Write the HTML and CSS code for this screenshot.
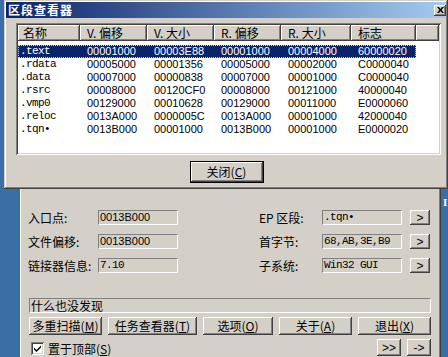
FILE: index.html
```html
<!DOCTYPE html>
<html>
<head>
<meta charset="utf-8">
<link rel="stylesheet" href="styles.css">
</head>
<body>
<div class="desktop">
  <div class="desk-label">I</div>

  <div class="mainwin">
    <div class="fields">
      <div class="frow">
        <div class="fgroup gleft"><span class="flabel lw1">入口点:</span><span class="fbox num">0013B000</span></div>
        <div class="fgroup gright"><span class="flabel lw2">EP 区段:</span><span class="fbox mono">.tqn•</span><span class="btn sbtn">&gt;</span></div>
      </div>
      <div class="frow">
        <div class="fgroup gleft"><span class="flabel lw1">文件偏移:</span><span class="fbox num">0013B000</span></div>
        <div class="fgroup gright"><span class="flabel lw2">首字节:</span><span class="fbox mono">68,AB,3E,B9</span><span class="btn sbtn">&gt;</span></div>
      </div>
      <div class="frow">
        <div class="fgroup gleft"><span class="flabel lw1">链接器信息:</span><span class="fbox mono">7.10</span></div>
        <div class="fgroup gright"><span class="flabel lw2">子系统:</span><span class="fbox mono">Win32 GUI</span><span class="btn sbtn">&gt;</span></div>
      </div>
    </div>

    <div class="status">什么也没发现</div>

    <div class="btnrow">
      <button class="btn b1">多重扫描(<u>M</u>)</button>
      <button class="btn b2">任务查看器(<u>T</u>)</button>
      <button class="btn b3">选项(<u>O</u>)</button>
      <button class="btn b4">关于(<u>A</u>)</button>
      <button class="btn b5">退出(<u>X</u>)</button>
    </div>

    <div class="bottomrow">
      <label class="chk">
        <span class="chkbox"><svg width="9" height="9" viewBox="0 0 9 9"><path d="M1 3.5 L3.5 6 L8 1.5 L8 3.5 L3.5 8 L1 5.5 Z" fill="#000"/></svg></span>
        <span>置于顶部(<u>S</u>)</span>
      </label>
      <div class="arrows">
        <span class="btn abtn">&gt;&gt;</span>
        <span class="btn abtn">-&gt;</span>
      </div>
    </div>
  </div>

  <div class="dialog">
    <div class="titlebar">
      <span class="title">区段查看器</span>
      <span class="closebtn"><svg width="7" height="6" viewBox="0 0 7 6"><path d="M0 0 L2 0 L3.5 2 L5 0 L7 0 L4.5 3 L7 6 L5 6 L3.5 4 L2 6 L0 6 L2.5 3 Z" fill="#000"/></svg></span>
    </div>
    <div class="list">
      <div class="lhead">
        <span class="hc c1">名称</span>
        <span class="hc c2">V. 偏移</span>
        <span class="hc c3">V. 大小</span>
        <span class="hc c4">R. 偏移</span>
        <span class="hc c5">R. 大小</span>
        <span class="hc c6">标志</span>
        <span class="hc cx"></span>
      </div>
      <div class="lbody">
        <div class="lrow sel"><span class="cell c1 mono">.text</span><span class="cell c2">00001000</span><span class="cell c3">00003E88</span><span class="cell c4">00001000</span><span class="cell c5">00004000</span><span class="cell c6">60000020</span></div>
        <div class="lrow"><span class="cell c1 mono">.rdata</span><span class="cell c2">00005000</span><span class="cell c3">00001356</span><span class="cell c4">00005000</span><span class="cell c5">00002000</span><span class="cell c6">C0000040</span></div>
        <div class="lrow"><span class="cell c1 mono">.data</span><span class="cell c2">00007000</span><span class="cell c3">00000838</span><span class="cell c4">00007000</span><span class="cell c5">00001000</span><span class="cell c6">C0000040</span></div>
        <div class="lrow"><span class="cell c1 mono">.rsrc</span><span class="cell c2">00008000</span><span class="cell c3">00120CF0</span><span class="cell c4">00008000</span><span class="cell c5">00121000</span><span class="cell c6">40000040</span></div>
        <div class="lrow"><span class="cell c1 mono">.vmp0</span><span class="cell c2">00129000</span><span class="cell c3">00010628</span><span class="cell c4">00129000</span><span class="cell c5">00011000</span><span class="cell c6">E0000060</span></div>
        <div class="lrow"><span class="cell c1 mono">.reloc</span><span class="cell c2">0013A000</span><span class="cell c3">0000005C</span><span class="cell c4">0013A000</span><span class="cell c5">00001000</span><span class="cell c6">42000040</span></div>
        <div class="lrow"><span class="cell c1 mono">.tqn•</span><span class="cell c2">0013B000</span><span class="cell c3">00001000</span><span class="cell c4">0013B000</span><span class="cell c5">00001000</span><span class="cell c6">E0000020</span></div>
      </div>
    </div>
    <div class="dlgfoot">
      <button class="btn defbtn">关闭(<u>C</u>)</button>
    </div>
  </div>
</div>
</body>
</html>
```

FILE: styles.css
```css
* { box-sizing: border-box; }
html, body { margin: 0; padding: 0; }
body {
  width: 448px;
  height: 357px;
  overflow: hidden;
  background: #3a6ea5;
  font-family: "Noto Sans CJK SC", "Liberation Sans", sans-serif;
  font-size: 12px;
  color: #000;
}
.desktop { position: relative; width: 448px; height: 357px; overflow: hidden; }

.desk-label {
  position: absolute;
  left: 443px;
  top: 196px;
  color: #fff;
  font-family: "Liberation Serif", serif;
  font-size: 11px;
  font-weight: bold;
  line-height: 12px;
}

/* ---------- shared controls ---------- */
.btn {
  background: #d4d0c8;
  border: none;
  padding: 0;
  margin: 0;
  font-family: inherit;
  font-size: 12px;
  color: #000;
  display: flex;
  align-items: center;
  justify-content: center;
  line-height: 1;
  box-shadow: inset -1px -1px #404040, inset 1px 1px #fff, inset -2px -2px #808080, inset 2px 2px #d4d0c8;
}
.btn u { text-decoration: underline; }

.num { font-family: "Liberation Sans", sans-serif; font-size: 11px; }
.mono { font-family: "Liberation Mono", monospace; font-size: 11px; letter-spacing: -0.6px; }

/* ---------- main window (behind) ---------- */
.mainwin {
  position: absolute;
  left: 20px;
  top: 186px;
  width: 421px;
  height: 171px;
  background: #d4d0c8;
  border-left: 1px solid #fff;
  border-right: 1px solid #404040;
  box-shadow: inset -1px 0 #808080;
  padding: 24px 9px 0 7px;
}
.fields { display: flex; flex-direction: column; gap: 9px; }
.frow { display: flex; height: 15px; align-items: center; }
.fgroup { display: flex; align-items: center; height: 15px; }
.gright { margin-left: 81px; }
.flabel { line-height: 15px; white-space: nowrap; }
.lw1 { width: 70px; }
.lw2 { width: 63px; }
.fbox {
  width: 80px;
  height: 15px;
  border-top: 1px solid #808080;
  border-left: 1px solid #808080;
  border-bottom: 1px solid #fff;
  border-right: 1px solid #fff;
  padding-left: 1px;
  line-height: 13px;
  white-space: nowrap;
  overflow: hidden;
}
.sbtn { width: 20px; height: 15px; margin-left: 8px; font-family: "Liberation Sans", sans-serif; font-size: 12px; }

.status {
  margin-top: 25px;
  margin-left: 1px;
  height: 15px;
  border-top: 1px solid #808080;
  border-left: 1px solid #808080;
  border-bottom: 1px solid #fff;
  border-right: 1px solid #fff;
  line-height: 13px;
  padding-left: 1px;
}

.btnrow { display: flex; gap: 6px; margin-top: 4px; margin-left: 1px; }
.btnrow .btn { height: 18px; }
.b1 { width: 73px; }
.b2 { width: 89px; }
.b3 { width: 70px; }
.b4 { width: 73px; }
.b5 { width: 73px; }

.bottomrow { display: flex; justify-content: space-between; align-items: center; margin-top: 4px; height: 17px; }
.chk { display: flex; align-items: center; margin-left: 3px; margin-top: 2px; gap: 4px; line-height: 13px; }
.chkbox {
  width: 13px;
  height: 13px;
  background: #fff;
  box-shadow: inset 1px 1px #808080, inset -1px -1px #fff, inset 2px 2px #404040, inset -2px -2px #d4d0c8;
  display: flex;
  align-items: center;
  justify-content: center;
}
.arrows { display: flex; gap: 6px; }
.abtn { width: 24px; height: 17px; font-family: "Liberation Sans", sans-serif; font-size: 12px; }

/* ---------- section viewer dialog ---------- */
.dialog {
  position: absolute;
  left: 4px;
  top: 0;
  width: 444px;
  height: 189px;
  background: #d4d0c8;
  box-shadow: inset -1px -1px #404040, inset 1px 1px #d4d0c8, inset -2px -2px #808080, inset 2px 2px #fff;
  padding: 2px 2px 0 2px;
  display: flex;
  flex-direction: column;
}
.titlebar {
  height: 16px;
  background: linear-gradient(to right, #0a246a, #a6caf0);
  display: flex;
  align-items: center;
  justify-content: space-between;
  padding: 0 0 0 2px;
}
.title {
  color: #fff;
  font-weight: bold;
  font-size: 12px;
  letter-spacing: 1px;
  line-height: 16px;
}
.closebtn {
  width: 12px;
  height: 11px;
  background: #d4d0c8;
  box-shadow: inset -1px -1px #404040, inset 1px 1px #fff, inset -2px -2px #808080;
  display: flex;
  align-items: center;
  justify-content: center;
}

.list {
  margin: 5px 5px 0 10px;
  height: 132px;
  background: #fff;
  padding: 2px;
  box-shadow: inset 1px 1px #808080, inset -1px -1px #fff, inset 2px 2px #404040, inset -2px -2px #d4d0c8;
}
.lhead { display: flex; height: 16px; }
.hc {
  height: 16px;
  background: #d4d0c8;
  box-shadow: inset -1px -1px #404040, inset 1px 1px #fff, inset -2px -2px #808080;
  line-height: 15px;
  padding-left: 7px;
  white-space: nowrap;
}
.c1 { width: 62px; }
.c2 { width: 67px; }
.c3 { width: 67px; }
.c4 { width: 67px; }
.c5 { width: 70px; }
.c6 { width: 65px; }
.cx { flex: 1; }
.hc.c1 { padding-left: 5px; }

.lbody { padding-top: 4px; }
.lrow { display: flex; height: 13px; width: 398px; }
.cell {
  line-height: 13px;
  padding-left: 7px;
  white-space: nowrap;
  font-family: "Liberation Sans", sans-serif;
  font-size: 11px;
}
.cell.c1 { padding-left: 2px; font-family: "Liberation Mono", monospace; font-size: 11px; letter-spacing: -0.6px; }
.lrow.sel {
  background: #0a246a;
  color: #fff;
  outline: 1px dotted #d8d8b0;
  outline-offset: -1px;
}

.dlgfoot { display: flex; justify-content: center; margin-top: 6px; padding-left: 1px; }
.defbtn {
  width: 74px;
  height: 22px;
  box-shadow: inset 0 0 0 1px #000, inset -2px -2px #404040, inset 2px 2px #fff, inset -3px -3px #808080;
}
```
